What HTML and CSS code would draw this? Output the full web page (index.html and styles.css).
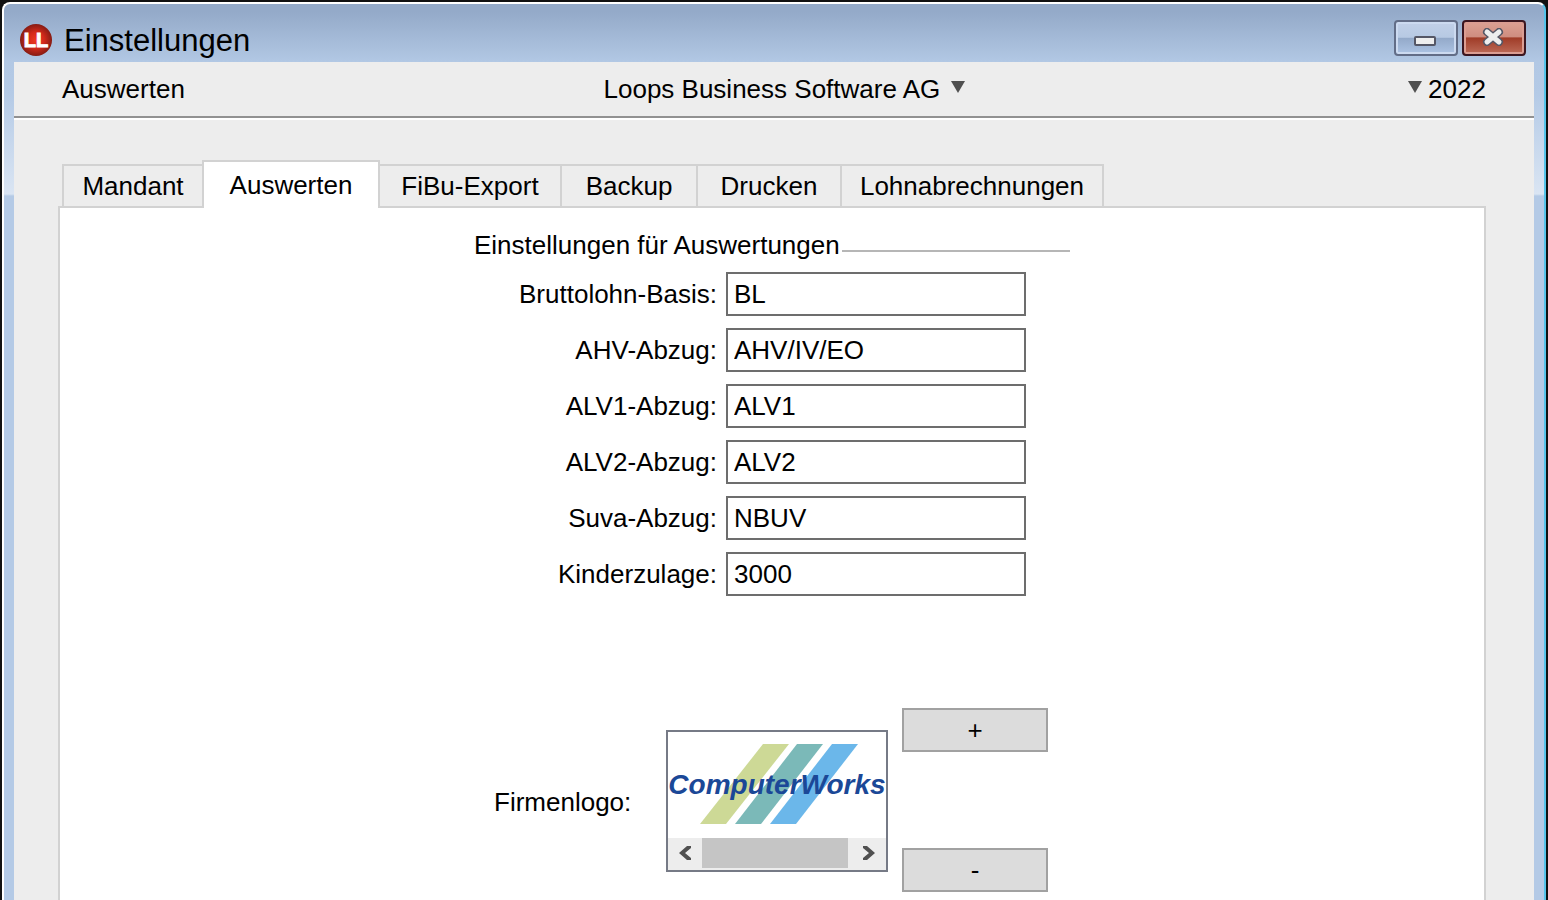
FILE: index.html
```
<!DOCTYPE html>
<html lang="de">
<head>
  <meta charset="UTF-8" />
  <meta name="viewport" content="width=device-width, initial-scale=1.0" />
  <title>Einstellungen</title>
  <link rel="stylesheet" href="styles.css">
</head>
<body>
  <div class="window">
    <header class="titlebar">
      <svg class="app-icon" viewBox="0 0 32 32" aria-hidden="true">
        <defs>
          <radialGradient id="ball">
            <stop offset="0" stop-color="#ee3a22" />
            <stop offset="0.5" stop-color="#d42a1a" />
            <stop offset="1" stop-color="#861c14" />
          </radialGradient>
        </defs>
        <circle cx="16" cy="16" r="16" fill="url(#ball)" />
        <text x="16" y="23" text-anchor="middle">LL</text>
      </svg>
      <h1>Einstellungen</h1>
      <button class="win-btn minimize" type="button" aria-label="Minimieren">
        <svg width="22" height="10" viewBox="0 0 22 10"><rect x="1" y="1" width="20" height="8" rx="1" fill="#eee" stroke="#555766" stroke-width="2" /></svg>
      </button>
      <button class="win-btn close" type="button" aria-label="Schliessen">
        <svg width="22" height="18" viewBox="0 0 22 18">
          <path d="M5 4l12 10M17 4L5 14" fill="none" stroke="#555766" stroke-width="8" stroke-linecap="round" />
          <path d="M5 4l12 10M17 4L5 14" fill="none" stroke="#eee" stroke-width="5" stroke-linecap="round" />
        </svg>
      </button>
    </header>

    <main class="content">
      <div class="toolbar">
        <span>Auswerten</span>
        <div class="company">
          <select aria-label="Mandant">
            <option>Loops Business Software AG</option>
          </select>
          <svg class="arrow" viewBox="0 0 14 12"><path d="M0 0h14L7 12z" /></svg>
        </div>
        <div class="year">
          <svg class="arrow" viewBox="0 0 14 12"><path d="M0 0h14L7 12z" /></svg>
          <select aria-label="Jahr">
            <option>2022</option>
          </select>
        </div>
      </div>

      <div class="tabs" role="tablist">
        <button type="button" role="tab">Mandant</button>
        <button type="button" role="tab" class="active" aria-selected="true">Auswerten</button>
        <button type="button" role="tab">FiBu-Export</button>
        <button type="button" role="tab">Backup</button>
        <button type="button" role="tab">Drucken</button>
        <button type="button" role="tab">Lohnabrechnungen</button>
      </div>

      <section class="panel">
        <form class="settings">
          <h2>Einstellungen für Auswertungen</h2>
          <div class="fields">
            <label for="basis">Bruttolohn-Basis:</label>
            <input id="basis" type="text" value="BL">
            <label for="ahv">AHV-Abzug:</label>
            <input id="ahv" type="text" value="AHV/IV/EO">
            <label for="alv1">ALV1-Abzug:</label>
            <input id="alv1" type="text" value="ALV1">
            <label for="alv2">ALV2-Abzug:</label>
            <input id="alv2" type="text" value="ALV2">
            <label for="suva">Suva-Abzug:</label>
            <input id="suva" type="text" value="NBUV">
            <label for="kinder">Kinderzulage:</label>
            <input id="kinder" type="text" value="3000">
          </div>

          <div class="logo-row">
            <span class="logo-label">Firmenlogo:</span>
            <div class="logo-box">
              <svg class="logo" viewBox="0 0 218 106" role="img" aria-label="ComputerWorks">
                <path d="M95 12h26L58 92H32z" fill="#cdd996" />
                <path d="M129 12h26L93 92H67z" fill="#7bb9b8" />
                <path d="M164 12h26L128 92h-26z" fill="#6bb7ea" />
                <text x="109" y="62" text-anchor="middle">ComputerWorks</text>
              </svg>
              <div class="scrollbar">
                <button type="button" aria-label="Nach links">
                  <svg width="12" height="14" viewBox="0 0 12 14"><path d="M12 0H8L0 7l8 7h4v-2L6 7l6-5z" /></svg>
                </button>
                <div class="thumb"></div>
                <button type="button" aria-label="Nach rechts">
                  <svg width="12" height="14" viewBox="0 0 12 14"><path d="M0 0h4l8 7-8 7H0v-2l6-5-6-5z" /></svg>
                </button>
              </div>
            </div>
            <div class="logo-buttons">
              <button type="button">+</button>
              <button type="button">-</button>
            </div>
          </div>
        </form>
      </section>
    </main>
  </div>
</body>
</html>
```
FILE: styles.css
```
* {
  box-sizing: border-box;
}

body {
  margin: 0;
  padding: 2px 2px 0;
  background: #111;
  color: #000;
  font-family: "Liberation Sans", Arial, sans-serif;
  font-size: 26px;
  line-height: 30px;
}

button,
input,
select {
  font: inherit;
  color: inherit;
}

h1,
h2 {
  margin: 0;
  font-weight: normal;
}

.window {
  display: flex;
  flex-direction: column;
  min-height: calc(100vh - 2px);
  padding: 0 10px;
  border: 2px solid #fff;
  border-right-color: #55c4ea;
  border-bottom: none;
  border-radius: 8px 8px 0 0;
  background: linear-gradient(#94aac9 0, #94aac9 8px, #b2c8e4 58px, #b4cae6 90px, #dae5f3 190px, #b4cae6 192px);
}

.titlebar {
  display: flex;
  align-items: center;
  height: 58px;
  padding: 14px 8px 0 6px;
}

.app-icon {
  width: 32px;
  height: 32px;
  margin-right: 12px;
}

.app-icon text {
  font-size: 20px;
  font-weight: bold;
  fill: #fff;
  stroke: #fff;
}

h1 {
  flex: 1;
  padding-top: 2px;
  font-size: 31px;
  line-height: 36px;
}

.win-btn {
  display: flex;
  align-items: center;
  justify-content: center;
  width: 64px;
  height: 36px;
  margin: 0 0 4px 4px;
  padding: 0;
  border: 2px solid #626d87;
  border-radius: 4px;
  box-shadow: inset 0 0 0 2px #ccdaf0;
  background: linear-gradient(#c1d0e8, #b7c9e3 48%, #93a9c9 50%, #adc4e4);
}

.minimize svg {
  margin: 6px 2px 0 0;
}

.close {
  border-color: #3c1620;
  box-shadow: inset 0 0 0 2px #db9d92;
  background: linear-gradient(#dda193, #cf8d80 46%, #a03c28 50%, #bd6b58);
}

.close svg {
  margin: 0 2px 2px 0;
}

.content {
  flex: 1;
  display: flex;
  flex-direction: column;
  background: #ededed;
}

.toolbar {
  display: grid;
  grid-template-columns: 1fr auto 1fr;
  align-items: center;
  height: 56px;
  padding: 0 48px;
  border-bottom: 2px solid #919191;
  box-shadow: 0 2px #fff;
}

.toolbar select {
  appearance: none;
  padding: 0;
  border: none;
  background: none;
}

.company,
.year {
  display: flex;
  align-items: center;
}

.company {
  gap: 8px;
  padding-left: 20px;
}

.year {
  justify-content: flex-end;
  gap: 6px;
}

.arrow {
  width: 14px;
  height: 12px;
  margin-bottom: 4px;
  fill: #505050;
}

.tabs {
  display: grid;
  grid-template-columns: 140px 176px 182px 136px 144px 262px;
  align-items: end;
  height: 48px;
  margin: 42px 48px 0;
}

.tabs button {
  height: 44px;
  margin-right: -2px;
  padding: 0;
  border: 2px solid #d2d2d2;
  background: #ededed;
}

.tabs .active {
  z-index: 1;
  height: 48px;
  border-bottom: none;
  background: #fff;
}

.panel {
  flex: 1;
  margin: -2px 48px 0 44px;
  padding: 22px 0 6px;
  border: 2px solid #d2d2d2;
  border-bottom: none;
  background: #fff;
}

.settings {
  width: 596px;
  margin: 0 auto;
}

h2 {
  display: flex;
  align-items: center;
  gap: 2px;
  font-size: 26px;
  line-height: 30px;
}

h2::after {
  content: "";
  flex: 1;
  height: 2px;
  margin-top: 12px;
  background: #b6b6b6;
}

.fields {
  display: grid;
  grid-template-columns: 243px 300px;
  align-items: center;
  gap: 12px 9px;
  margin-top: 12px;
}

.fields label {
  text-align: right;
}

.fields input {
  width: 100%;
  height: 44px;
  padding: 0 6px;
  border: 2px solid #6d6d6d;
  background: #fff;
}

.logo-row {
  display: flex;
  align-items: center;
  height: 184px;
  margin-top: 112px;
  padding-left: 20px;
}

.logo-label {
  width: 172px;
  padding-top: 4px;
}

.logo-box {
  width: 222px;
  margin-top: 2px;
  border: 2px solid #767a86;
}

.logo {
  display: block;
  width: 100%;
  height: 106px;
}

.logo text {
  font-size: 28px;
  font-weight: bold;
  font-style: italic;
  fill: #1b4897;
}

.scrollbar {
  display: grid;
  grid-template-columns: 34px 1fr 38px;
  height: 32px;
  padding-bottom: 2px;
  background: #ededed;
}

.scrollbar button {
  display: flex;
  align-items: center;
  justify-content: center;
  padding: 0;
  border: none;
  background: none;
}

.scrollbar button:last-child {
  padding-left: 4px;
}

.scrollbar path {
  fill: #505050;
}

.thumb {
  background: #c5c5c5;
}

.logo-buttons {
  display: flex;
  flex-direction: column;
  justify-content: space-between;
  height: 100%;
  margin-left: 14px;
}

.logo-buttons button {
  width: 146px;
  height: 44px;
  padding: 0;
  border: 2px solid #a1a1a1;
  background: #dcdcdc;
}
```
